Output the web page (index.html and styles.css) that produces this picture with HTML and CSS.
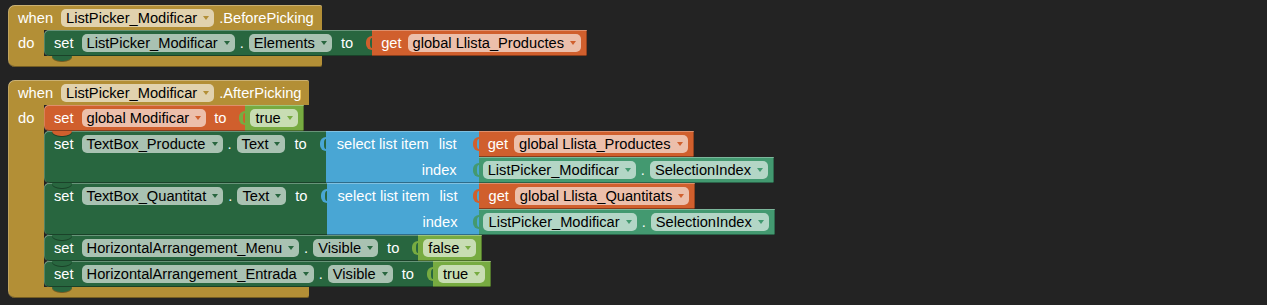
FILE: index.html
```html
<!DOCTYPE html>
<html lang="ca">
  <head>
    <meta charset="UTF-8" />
    <title>Blocs - ListPicker_Modificar</title>
    <link rel="stylesheet" href="styles.css">
  </head>
  <body>
    <div class="workspace">
      <!-- when ListPicker_Modificar.BeforePicking -->
      <div class="event">
        <div class="hat">
          <span class="lbl">when</span>
          <span class="dd">ListPicker_Modificar</span>
          <span class="lbl dot">.BeforePicking</span>
        </div>
        <div class="do-row">
          <div class="do">do</div>
          <div class="stack">
            <div class="row">
              <div class="stmt comp-set">
                <span class="lbl">set</span>
                <span class="dd">ListPicker_Modificar</span>
                <span class="lbl dot">.</span>
                <span class="dd">Elements</span>
                <span class="lbl to">to</span>
              </div>
              <div class="value var get">
                <span class="lbl">get</span>
                <span class="dd">global Llista_Productes</span>
              </div>
            </div>
          </div>
        </div>
        <div class="foot"></div>
      </div>

      <!-- when ListPicker_Modificar.AfterPicking -->
      <div class="event">
        <div class="hat">
          <span class="lbl">when</span>
          <span class="dd">ListPicker_Modificar</span>
          <span class="lbl dot">.AfterPicking</span>
        </div>
        <div class="do-row">
          <div class="do">do</div>
          <div class="stack">
            <div class="row">
              <div class="stmt var">
                <span class="lbl">set</span>
                <span class="dd">global Modificar</span>
                <span class="lbl">to</span>
              </div>
              <div class="value logic">
                <span class="dd">true</span>
              </div>
            </div>

            <div class="row">
              <div class="stmt comp-set">
                <span class="lbl">set</span>
                <span class="dd">TextBox_Producte</span>
                <span class="lbl dot">.</span>
                <span class="dd">Text</span>
                <span class="lbl to">to</span>
              </div>
              <div class="select">
                <div class="select-body list">
                  <div class="sl-line">
                    <span class="lbl">select list item</span>
                    <span class="lbl">list</span>
                  </div>
                  <div class="sl-line">
                    <span class="lbl">index</span>
                  </div>
                </div>
                <div class="select-inputs">
                  <div class="value var get">
                    <span class="lbl">get</span>
                    <span class="dd">global Llista_Productes</span>
                  </div>
                  <div class="value comp-get">
                    <span class="dd">ListPicker_Modificar</span>
                    <span class="lbl dot">.</span>
                    <span class="dd">SelectionIndex</span>
                  </div>
                </div>
              </div>
            </div>

            <div class="row">
              <div class="stmt comp-set">
                <span class="lbl">set</span>
                <span class="dd">TextBox_Quantitat</span>
                <span class="lbl dot">.</span>
                <span class="dd">Text</span>
                <span class="lbl to">to</span>
              </div>
              <div class="select">
                <div class="select-body list">
                  <div class="sl-line">
                    <span class="lbl">select list item</span>
                    <span class="lbl">list</span>
                  </div>
                  <div class="sl-line">
                    <span class="lbl">index</span>
                  </div>
                </div>
                <div class="select-inputs">
                  <div class="value var get">
                    <span class="lbl">get</span>
                    <span class="dd">global Llista_Quantitats</span>
                  </div>
                  <div class="value comp-get">
                    <span class="dd">ListPicker_Modificar</span>
                    <span class="lbl dot">.</span>
                    <span class="dd">SelectionIndex</span>
                  </div>
                </div>
              </div>
            </div>

            <div class="row">
              <div class="stmt comp-set">
                <span class="lbl">set</span>
                <span class="dd">HorizontalArrangement_Menu</span>
                <span class="lbl dot">.</span>
                <span class="dd">Visible</span>
                <span class="lbl to">to</span>
              </div>
              <div class="value logic">
                <span class="dd">false</span>
              </div>
            </div>

            <div class="row">
              <div class="stmt comp-set">
                <span class="lbl">set</span>
                <span class="dd">HorizontalArrangement_Entrada</span>
                <span class="lbl dot">.</span>
                <span class="dd">Visible</span>
                <span class="lbl to">to</span>
              </div>
              <div class="value logic">
                <span class="dd">true</span>
              </div>
            </div>
          </div>
        </div>
        <div class="foot"></div>
      </div>
    </div>
  </body>
</html>
```

FILE: styles.css
```css
body {
  margin: 0;
  background-color: #232323;
  font-family: "Liberation Sans", Arial, sans-serif;
  font-size: 14.67px;
}
.workspace {
  display: flex;
  flex-direction: column;
  align-items: flex-start;
  gap: 13px;
  padding: 5px 0 0 8px;
}

/* colours per block type */
.event { --c: #b38f36; }
.comp-set { --c: #28663f; }
.comp-get { --c: #439970; }
.var { --c: #d05f2d; }
.logic { --c: #77ab41; }
.list { --c: #49a6d4; }

/* event block (C shape) */
.event {
  display: flex;
  flex-direction: column;
}
.hat {
  display: flex;
  align-items: center;
  gap: 8px;
  height: 25px;
  padding: 0 11px 0 10px;
  background-color: var(--c);
  border-radius: 7px 2px 0 0;
  box-shadow: inset 0 1px rgba(255, 255, 255, 0.3), inset 1px 0 rgba(255, 255, 255, 0.2);
}
.do-row {
  display: flex;
  width: 0;
}
.do {
  flex: none;
  width: 36px;
  box-sizing: border-box;
  padding: 4px 0 0 10px;
  line-height: 18px;
  color: #fff;
  background-color: var(--c);
  box-shadow: inset 1px 0 rgba(255, 255, 255, 0.2);
}
.stack {
  flex: none;
  display: flex;
  flex-direction: column;
  align-items: flex-start;
}
.foot {
  height: 11px;
  background-color: var(--c);
  border-radius: 0 0 2px 7px;
  box-shadow: inset 0 -1px rgba(0, 0, 0, 0.35), inset 1px 0 rgba(255, 255, 255, 0.2);
}

/* fields */
.lbl {
  color: #fff;
  line-height: 18px;
  white-space: nowrap;
}
.lbl.dot {
  margin: 0 -3px;
}
.lbl.to {
  margin-left: 1px;
}
.dd {
  display: inline-flex;
  align-items: center;
  gap: 6px;
  height: 18px;
  padding: 0 5px;
  border-radius: 5px;
  background-color: rgba(255, 255, 255, 0.6);
  color: #000;
  white-space: nowrap;
}
.dd::after {
  content: "";
  border-left: 3px solid transparent;
  border-right: 3px solid transparent;
  border-top: 4px solid var(--c);
}

/* statement blocks */
.row {
  display: flex;
}
.stmt {
  position: relative;
  display: flex;
  align-items: flex-start;
  gap: 8px;
  padding: 4px 19px 4px 10px;
  background-color: var(--c);
  border-radius: 5px 0 0 5px;
  box-shadow: inset 0 1px rgba(255, 255, 255, 0.3), inset 1px 0 rgba(255, 255, 255, 0.2),
    inset 0 -1px rgba(0, 0, 0, 0.35);
}
.stmt::after {
  content: "";
  position: absolute;
  left: 8px;
  bottom: -5px;
  width: 20px;
  height: 5px;
  background-color: var(--c);
  border-radius: 0 0 9px 9px / 0 0 5px 5px;
  box-shadow: 0 1px rgba(0, 0, 0, 0.35);
  z-index: 1;
}

/* value blocks */
.value {
  position: relative;
  display: flex;
  align-items: center;
  gap: 8px;
  height: 26px;
  padding: 0 6px 0 5px;
  background-color: var(--c);
  box-shadow: inset 0 1px rgba(255, 255, 255, 0.3), inset 0 -1px rgba(0, 0, 0, 0.35),
    inset -1px 0 rgba(0, 0, 0, 0.3);
}
.value.get {
  gap: 6px;
  padding-left: 9px;
}
.value.comp-get {
  padding-left: 4px;
}
.value::before,
.select-body::before {
  content: "";
  position: absolute;
  left: -6px;
  top: 6px;
  width: 6px;
  height: 14px;
  box-sizing: border-box;
  border: 2px solid var(--c);
  border-left-width: 4px;
  border-right: none;
  border-radius: 7px 0 0 7px;
}

/* select list item */
.select {
  display: flex;
}
.select-body {
  position: relative;
  display: flex;
  flex-direction: column;
  align-items: flex-end;
  padding: 0 22px 0 11px;
  background-color: var(--c);
  box-shadow: inset 0 1px rgba(255, 255, 255, 0.3), inset 0 -1px rgba(0, 0, 0, 0.35);
}
.sl-line {
  display: flex;
  align-items: center;
  gap: 10px;
  height: 26px;
}
.select-inputs {
  display: flex;
  flex-direction: column;
  align-items: flex-start;
}
```
